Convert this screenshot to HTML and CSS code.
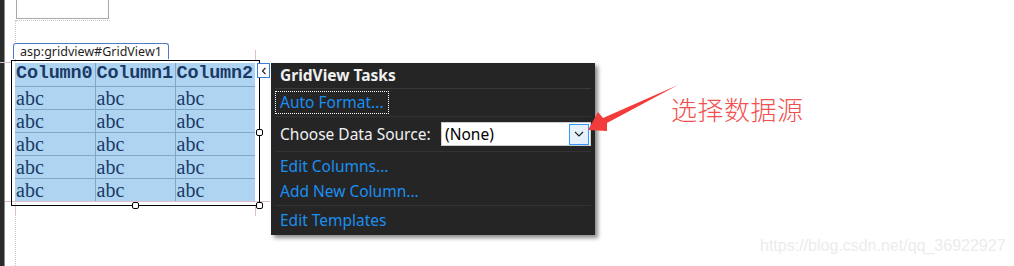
FILE: index.html
```html
<!DOCTYPE html>
<html>
<head>
<meta charset="utf-8">
<link rel="stylesheet" href="styles.css">
</head>
<body>
<div class="surface">
  <div class="strip"></div>
  <div class="textbox"></div>
  <div class="dot-h"></div>
  <div class="dot-v"></div>

  <div class="tab">asp:gridview#GridView1</div>
  <div class="guide g-top-l"></div>
  <div class="guide g-top-r"></div>
  <div class="guide g-bot-h"></div>
  <div class="guide g-bot-l"></div>
  <div class="guide g-bot-r"></div>

  <div class="selection"></div>
  <table class="grid">
    <tr class="head"><th>Column0</th><th>Column1</th><th>Column2</th></tr>
    <tr><td>abc</td><td>abc</td><td>abc</td></tr>
    <tr><td>abc</td><td>abc</td><td>abc</td></tr>
    <tr><td>abc</td><td>abc</td><td>abc</td></tr>
    <tr><td>abc</td><td>abc</td><td>abc</td></tr>
    <tr><td>abc</td><td>abc</td><td>abc</td></tr>
  </table>
  <div class="handle h-right"></div>
  <div class="handle h-bottom"></div>
  <div class="handle h-corner"></div>

  <div class="collapse">
    <svg width="6" height="8" viewBox="0 0 6 8"><path d="M4.5 0.8 L1.5 4 L4.5 7.2" fill="none" stroke="#1e1e1e" stroke-width="1.2"/></svg>
  </div>

  <div class="tasks">
    <div class="title">GridView Tasks</div>
    <div class="section first">
      <span class="link focused">Auto Format...</span>
    </div>
    <div class="section row">
      <span class="label">Choose Data Source:</span>
      <div class="select">
        <span class="value">(None)</span>
        <span class="drop">
          <svg width="10" height="6" viewBox="0 0 10 6"><path d="M1 1 L5 5 L9 1" fill="none" stroke="#1e1e1e" stroke-width="1.1"/></svg>
        </span>
      </div>
    </div>
    <div class="section list">
      <span class="link">Edit Columns...</span>
      <span class="link">Add New Column...</span>
    </div>
    <div class="section last">
      <span class="link">Edit Templates</span>
    </div>
  </div>

  <svg class="arrow" width="100" height="55" viewBox="585 80 100 55">
    <polygon points="588,130 598,112 603,118 678,85 607,123 607,131" fill="#f23c3c"/>
  </svg>
  <div class="note">选择数据源</div>
  <div class="watermark">https://blog.csdn.net/qq_36922927</div>
</div>
</body>
</html>
```

FILE: styles.css
```css
html, body {
  margin: 0;
  padding: 0;
  background: #ffffff;
}
.surface {
  position: relative;
  width: 1014px;
  height: 266px;
  overflow: hidden;
  background: #ffffff;
}
.strip {
  position: absolute;
  left: 0;
  top: 0;
  width: 4px;
  height: 266px;
  background: #2b2b2b;
  border-right: 1px solid #8a8a8a;
}
.textbox {
  position: absolute;
  left: 16px;
  top: -2px;
  width: 91px;
  height: 19px;
  border: 1px solid #a9a9a9;
  background: #fff;
}
.dot-h {
  position: absolute;
  left: 16px;
  top: 20px;
  width: 94px;
  border-top: 1px dotted #c8c8c8;
}
.dot-v {
  position: absolute;
  left: 15px;
  top: 20px;
  height: 246px;
  border-left: 1px dotted #c8c8c8;
}
.tab {
  position: absolute;
  left: 13px;
  top: 43px;
  width: 154px;
  height: 15px;
  border: 1px solid #4f7bc4;
  border-bottom: none;
  border-radius: 3px 3px 0 0;
  background: #ffffff;
  font: 12.5px/15px "Noto Sans", "DejaVu Sans", sans-serif;
  color: #1e1e1e;
  text-align: center;
}
.guide {
  position: absolute;
  background: #dcc2c6;
}
.g-top-l { left: 0; top: 62px; width: 11px; height: 1px; }
.g-top-r { left: 255px; top: 50px; width: 1px; height: 10px; }
.g-bot-h { left: 5px; top: 201px; width: 265px; height: 1px; }
.g-bot-l { left: 15px; top: 206px; width: 1px; height: 10px; }
.g-bot-r { left: 255px; top: 206px; width: 1px; height: 10px; }

.selection {
  position: absolute;
  left: 11px;
  top: 60px;
  width: 247px;
  height: 144px;
  border: 1px solid #000;
}
.grid {
  position: absolute;
  left: 15px;
  top: 63px;
  width: 240px;
  border-collapse: collapse;
  background: #aed4f2;
  table-layout: fixed;
}
.grid th, .grid td {
  box-sizing: border-box;
  width: 80px;
  height: 23px;
  padding: 0 0 0 1px;
  border: 1px solid #7fa7c9;
  text-align: left;
  color: #1b3a66;
  overflow: hidden;
  white-space: nowrap;
  vertical-align: middle;
}
.grid tr:first-child th { border-top: none; }
.grid th:first-child, .grid td:first-child { border-left: none; }
.grid th:last-child, .grid td:last-child { border-right: none; }
.grid tr:last-child td { border-bottom: none; }
.grid th {
  font: bold 18.5px/20px "Liberation Mono", "Courier New", monospace;
  letter-spacing: -0.2px;
}
.grid td {
  font: 20px/20px "Liberation Serif", "Times New Roman", serif;
}
.handle {
  position: absolute;
  width: 5px;
  height: 5px;
  border: 1px solid #000;
  border-radius: 2px;
  background: #fff;
}
.h-right { left: 256px; top: 129px; }
.h-bottom { left: 132px; top: 202px; }
.h-corner { left: 256px; top: 202px; }

.collapse {
  position: absolute;
  left: 257px;
  top: 63px;
  width: 11px;
  height: 13px;
  border: 1px solid #3b7dd8;
  background: #fff;
  display: flex;
  align-items: center;
  justify-content: center;
}
.collapse svg { display: block; }

.tasks {
  position: absolute;
  left: 271px;
  top: 63px;
  width: 324px;
  height: 172px;
  background: #252526;
  box-shadow: 3px 3px 4px rgba(0, 0, 0, 0.45);
  font-family: "Segoe UI", "Noto Sans", "Open Sans", sans-serif;
  font-size: 15.5px;
  display: flex;
  flex-direction: column;
  padding: 0 4px 0 4px;
  box-sizing: border-box;
}
.title {
  color: #f1f1f1;
  font-weight: bold;
  height: 25px;
  line-height: 25px;
  padding-left: 5px;
  border-bottom: 1px solid #3a3a3c;
}
.section {
  display: flex;
  border-bottom: 1px solid #333335;
}
.first {
  height: 27px;
  align-items: center;
  padding-left: 2px;
}
.row {
  height: 34px;
  align-items: center;
  padding-left: 5px;
}
.list {
  flex-direction: column;
  height: 53px;
  justify-content: center;
  padding-left: 5px;
  gap: 6px;
}
.last {
  border-bottom: none;
  height: 28px;
  align-items: center;
  padding-left: 5px;
}
.link {
  color: #1b8ef0;
  line-height: 19px;
}
.focused {
  outline: 1px dotted #ffffff;
  outline-offset: 1px;
  padding: 0 3px;
}
.label {
  color: #f1f1f1;
}
.select {
  margin-left: auto;
  width: 148px;
  height: 22px;
  border: 1px solid #cccccc;
  background: #ffffff;
  display: flex;
  align-items: center;
  justify-content: space-between;
  box-sizing: content-box;
}
.value {
  color: #000;
  padding-left: 3px;
}
.drop {
  width: 18px;
  height: 19px;
  border: 1px solid #3399ff;
  background: #e5f1fb;
  margin-right: 1px;
  display: flex;
  align-items: center;
  justify-content: center;
}
.drop svg { display: block; }

.arrow {
  position: absolute;
  left: 585px;
  top: 80px;
}
.note {
  position: absolute;
  left: 671px;
  top: 93px;
  font: 300 26px/32px "Noto Sans CJK SC", sans-serif;
  color: #f25050;
  letter-spacing: 0.5px;
}
.watermark {
  position: absolute;
  left: 760px;
  top: 237px;
  font: 16px/18px "Liberation Sans", Arial, sans-serif;
  color: #ececec;
}
```
